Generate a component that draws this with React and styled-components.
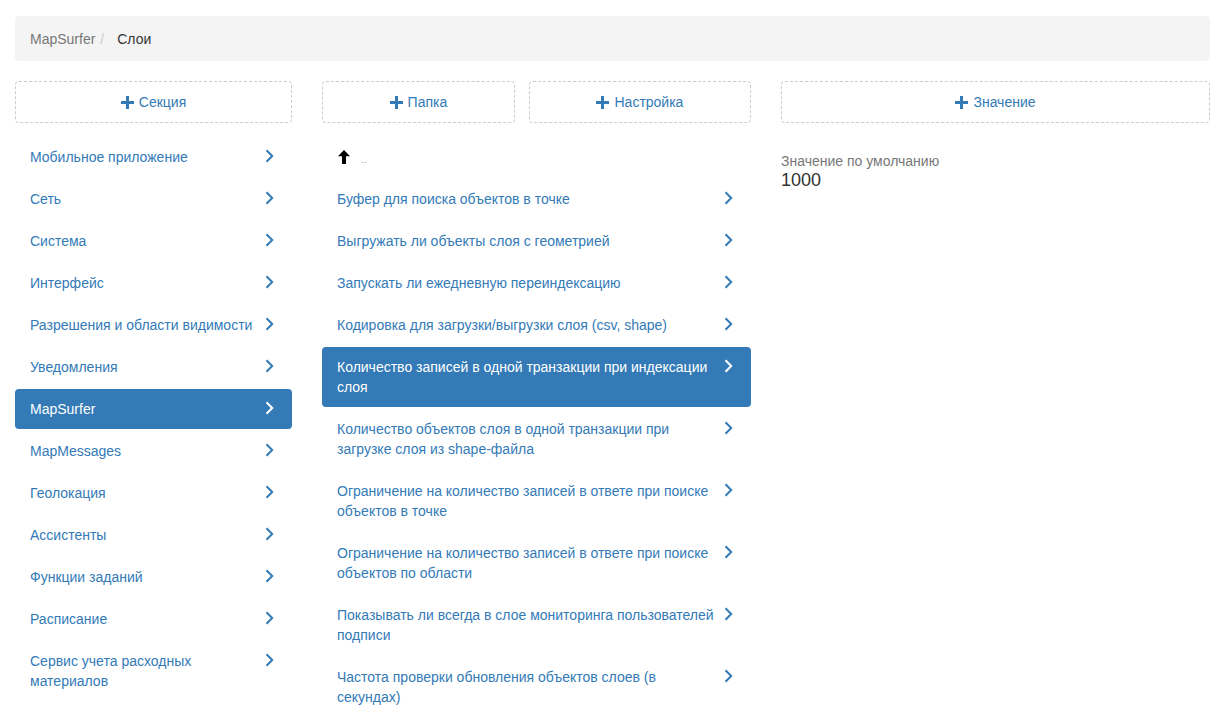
import React from 'react';
import styled, { createGlobalStyle } from 'styled-components';

const GlobalStyle = createGlobalStyle`
  * { box-sizing: border-box; }
  body {
    margin: 0;
    background: #fff;
    font-family: "Liberation Sans", Arial, sans-serif;
    font-size: 14px;
    line-height: 20px;
    color: #333;
  }
`;

const Page = styled.div`
  padding: 16px 15px 0;
`;

const Breadcrumb = styled.div`
  display: flex;
  align-items: center;
  height: 45px;
  padding: 1px 15px 0;
  background: #f4f4f4;
  border-radius: 4px;
  margin-bottom: 20px;
`;

const Crumb = styled.span`
  color: ${p => (p.$active ? '#333' : '#777')};
`;

const Sep = styled.span`
  color: #ccc;
  padding: 0 13px 0 5px;
`;

const Columns = styled.div`
  display: grid;
  grid-template-columns: 277fr 429fr 429fr;
  column-gap: 30px;
  align-items: start;
`;

const ButtonRow = styled.div`
  display: flex;
  gap: 14px;
  margin-bottom: 14px;
`;

const AddButton = styled.button`
  flex: 1 1 auto;
  height: 42px;
  display: flex;
  align-items: center;
  justify-content: center;
  gap: 5px;
  background: #fff;
  border: 1px dashed #ccc;
  border-radius: 4px;
  color: #337ab7;
  font-family: inherit;
  font-size: 14px;
  cursor: pointer;
`;

const List = styled.div`
  display: flex;
  flex-direction: column;
  gap: 2px;
`;

const Item = styled.div`
  display: flex;
  align-items: flex-start;
  padding: 10px 15px;
  border-radius: 4px;
  line-height: 20px;
  color: ${p => (p.$active ? '#fff' : '#337ab7')};
  background: ${p => (p.$active ? '#337ab7' : 'transparent')};
`;

const ItemText = styled.span`
  flex: 1;
  min-width: 0;
`;

const Chevron = styled.span`
  width: 15px;
  height: 20px;
  display: flex;
  justify-content: flex-end;
  padding-right: 3px;
  padding-top: 2px;
  flex-shrink: 0;
`;

const UpItem = styled.div`
  display: flex;
  align-items: center;
  padding: 10px 16px;
  height: 40px;
`;

const Dots = styled.span`
  color: #999;
  font-size: 10px;
  margin-left: 11px;
  padding-top: 6px;
`;

const Field = styled.div`
  padding-top: 16px;
`;

const FieldLabel = styled.div`
  color: #777;
  font-size: 14px;
  line-height: 17px;
`;

const FieldValue = styled.div`
  color: #333;
  font-size: 18px;
  line-height: 21px;
`;

const Plus = () => (
  <svg width="13" height="13" viewBox="0 0 13 13">
    <path d="M5 0h3v5h5v3H8v5H5V8H0V5h5z" fill="#337ab7" />
  </svg>
);

const ChevronIcon = ({ color }) => (
  <svg width="9" height="14" viewBox="0 0 9 14">
    <path d="M1.5 1.2L7.2 7L1.5 12.8" fill="none" stroke={color} strokeWidth="2" />
  </svg>
);

const ArrowUp = () => (
  <svg width="12" height="14" viewBox="0 0 12 14">
    <path d="M6 0L12 6.2H8V14H4V6.2H0z" fill="#000" />
  </svg>
);

const sections = [
  'Мобильное приложение',
  'Сеть',
  'Система',
  'Интерфейс',
  'Разрешения и области видимости',
  'Уведомления',
  'MapSurfer',
  'MapMessages',
  'Геолокация',
  'Ассистенты',
  'Функции заданий',
  'Расписание',
  'Сервис учета расходных материалов',
];

const settings = [
  'Буфер для поиска объектов в точке',
  'Выгружать ли объекты слоя с геометрией',
  'Запускать ли ежедневную переиндексацию',
  'Кодировка для загрузки/выгрузки слоя (csv, shape)',
  'Количество записей в одной транзакции при индексации слоя',
  'Количество объектов слоя в одной транзакции при загрузке слоя из shape-файла',
  'Ограничение на количество записей в ответе при поиске объектов в точке',
  'Ограничение на количество записей в ответе при поиске объектов по области',
  'Показывать ли всегда в слое мониторинга пользователей подписи',
  'Частота проверки обновления объектов слоев (в секундах)',
];

const Row = ({ text, active }) => (
  <Item $active={active}>
    <ItemText>{text}</ItemText>
    <Chevron>
      <ChevronIcon color={active ? '#fff' : '#337ab7'} />
    </Chevron>
  </Item>
);

export default function App() {
  return (
    <>
      <GlobalStyle />
      <Page>
        <Breadcrumb>
          <Crumb>MapSurfer</Crumb>
          <Sep>/</Sep>
          <Crumb $active>Слои</Crumb>
        </Breadcrumb>
        <Columns>
          <div>
            <ButtonRow>
              <AddButton><Plus />Секция</AddButton>
            </ButtonRow>
            <List>
              {sections.map(s => (
                <Row key={s} text={s} active={s === 'MapSurfer'} />
              ))}
            </List>
          </div>
          <div>
            <ButtonRow>
              <AddButton><Plus />Папка</AddButton>
              <AddButton><Plus />Настройка</AddButton>
            </ButtonRow>
            <List>
              <UpItem>
                <ArrowUp />
                <Dots>..</Dots>
              </UpItem>
              {settings.map((s, i) => (
                <Row key={s} text={s} active={i === 4} />
              ))}
            </List>
          </div>
          <div>
            <ButtonRow>
              <AddButton><Plus />Значение</AddButton>
            </ButtonRow>
            <Field>
              <FieldLabel>Значение по умолчанию</FieldLabel>
              <FieldValue>1000</FieldValue>
            </Field>
          </div>
        </Columns>
      </Page>
    </>
  );
}
